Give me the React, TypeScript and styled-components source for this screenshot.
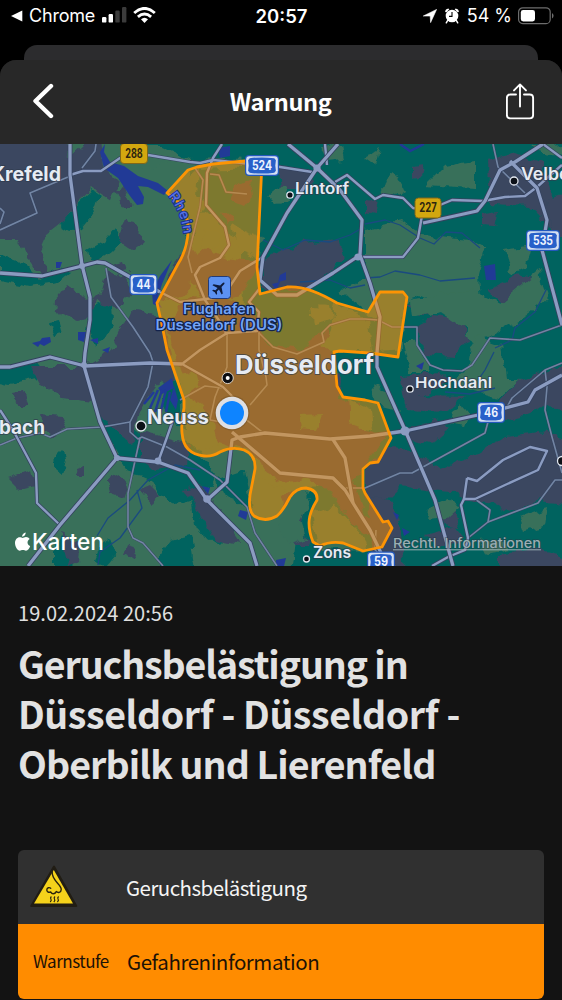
import React from "react";
import styled, { createGlobalStyle } from "styled-components";

const GlobalStyle = createGlobalStyle`
  * { box-sizing: border-box; }
  html, body { margin: 0; padding: 0; background: #000; }
  body { width: 562px; height: 1000px; overflow: hidden; }
`;

const sans = `"Noto Sans CJK SC", "Open Sans", sans-serif`;
const system = `Inter, "Liberation Sans", sans-serif`;

const Screen = styled.main`
  width: 562px;
  height: 1000px;
  overflow: hidden;
  display: flex;
  flex-direction: column;
  background: #000;
  font-family: ${sans};
`;

const StatusBar = styled.header`
  height: 45px;
  flex: none;
  padding: 0 8px 14px 11px;
  display: grid;
  grid-template-columns: 1fr auto 1fr;
  align-items: center;
  color: #fff;
  font-family: ${system};
  font-size: 18px;
`;

const StatusGroup = styled.div<{ $end?: boolean }>`
  display: flex;
  align-items: center;
  justify-content: ${(p) => (p.$end ? "flex-end" : "flex-start")};
  svg { display: block; flex: none; }
`;

const StatusText = styled.span<{ $l: number; $r: number; $track?: number }>`
  margin: 0 ${(p) => p.$r}px 0 ${(p) => p.$l}px;
  letter-spacing: ${(p) => p.$track ?? 0}px;
  white-space: nowrap;
`;

const Clock = styled.time`
  font-size: 18.5px;
  font-weight: 600;
  margin-right: 2px;
`;

const BackSheet = styled.div`
  flex: none;
  height: 15px;
  margin: 0 24px;
  border-radius: 13px 13px 0 0;
  background: #2c2c2e;
`;

const Sheet = styled.section`
  flex: 1;
  min-height: 0;
  display: flex;
  flex-direction: column;
  border-radius: 16px 16px 0 0;
  overflow: hidden;
  background: #131313;
`;

const NavBar = styled.nav`
  flex: none;
  height: 84px;
  padding: 0 26px 2px 32px;
  display: grid;
  grid-template-columns: 1fr auto 1fr;
  align-items: center;
  background: #282828;
`;

const NavTitle = styled.h1`
  margin: 0 7px 0 0;
  color: #fff;
  font-size: 23.5px;
  font-weight: 700;
  line-height: 32px;
  letter-spacing: -0.4px;
`;

const NavButton = styled.button<{ $end?: boolean }>`
  padding: 0;
  border: 0;
  background: none;
  color: #fff;
  justify-self: ${(p) => (p.$end ? "end" : "start")};
  svg { display: block; }
`;

const MapView = styled.svg`
  display: block;
  flex: none;
  width: 562px;
  height: 422px;
  font-family: ${system};
`;

const Article = styled.article`
  padding: 32px 18px 0;
  display: flex;
  flex-direction: column;
`;

const DateLine = styled.p`
  margin: 0;
  color: #e0e0e0;
  font-size: 20px;
  line-height: 30px;
  letter-spacing: 0.05px;
`;

const Headline = styled.h2`
  margin: 10px 0 0;
  color: #e2e2e2;
  font-size: 37.5px;
  font-weight: 700;
  line-height: 50px;
  white-space: nowrap;
`;

const HeadlineRow = styled.span<{ $track: number }>`
  display: block;
  letter-spacing: ${(p) => p.$track}px;
`;

const Card = styled.div`
  margin-top: 62px;
  border-radius: 6px;
  overflow: hidden;
`;

const CardRow = styled.div<{ $alert?: boolean }>`
  height: ${(p) => (p.$alert ? 75 : 74)}px;
  display: grid;
  grid-template-columns: ${(p) => (p.$alert ? "94px" : "96px")} 1fr;
  align-items: center;
  padding: 0 12px 1px ${(p) => (p.$alert ? 15 : 12)}px;
  background: ${(p) => (p.$alert ? "#ff8c00" : "#303030")};
  color: ${(p) => (p.$alert ? "#1c1206" : "#f5f5f5")};
`;

const CardValue = styled.span<{ $track: number }>`
  font-size: 20.5px;
  line-height: 30px;
  letter-spacing: ${(p) => p.$track}px;
`;

const CardLabel = styled.span`
  font-size: 17px;
  line-height: 26px;
  letter-spacing: -0.5px;
`;

const SLATE = "#3a4760";
const TEAL = "#04645f";
const GREEN = "#39705a";
const WATER = "#213a96";

const land: [string, string[]][] = [
  [TEAL, [
    "240,130 580,130 580,580 290,580 300,500 330,470 245,440",
    "0,255 20,262 38,280 62,268 72,270 58,282 30,286 0,280",
    "75,205 92,190 100,196 95,212 82,228 70,232 60,226",
    "88,250 105,240 115,228 122,240 112,252 98,262 90,260",
    "92,305 112,300 113,325 105,340 95,345 88,330",
    "48,322 60,320 64,334 54,336",
    "-10,368 40,362 36,378 10,384 -10,380",
    "90,392 102,388 112,405 132,425 150,440 160,455 150,480 128,470 110,440",
    "52,460 65,447 67,462 62,474 52,466",
    "130,458 190,440 215,475 205,498 180,505 160,495 150,478 132,475",
    "165,370 180,385 184,430 170,420 160,400",
    "160,555 172,540 190,535 196,580 160,580",
    "215,480 245,470 252,515 235,500 222,495",
    "190,500 220,510 235,530 220,545 195,530",
    "100,548 112,540 116,552 104,566 95,560",
    "60,535 75,550 74,580 55,580 55,545",
    "105,130 262,130 262,158 190,160 160,146 120,146",
    "196,170 262,168 262,240 236,240 214,214 196,215",
    "190,170 196,168 192,260 184,270",
  ]],
  [SLATE, [
    "-10,130 66,130 68,160 100,130 104,168 118,182 110,200 92,188 74,205 64,222 46,236 40,250 48,268 42,276 28,262 18,240 -10,240",
    "125,220 134,222 144,243 133,250 118,240",
    "56,300 68,284 80,292 90,302 102,290 108,270 124,278 132,292 118,308 96,300 90,318 76,320 55,312",
    "30,366 85,366 110,352 130,310 162,315 176,380 158,384 140,410 132,445 110,427 92,402 62,398 40,384",
    "13,392 24,390 28,402 20,408",
    "8,478 32,470 36,486 20,490",
    "107,478 118,473 128,487 124,498 110,493",
    "138,490 150,485 160,495 150,504",
    "75,468 84,465 84,474 76,474",
    "60,532 80,542 78,560 68,566",
    "128,545 138,548 134,560 124,556",
    "140,430 190,445 188,465 155,470 140,455",
    "185,490 200,484 212,500 230,520 240,545 215,540 200,515",
    "113,190 125,188 134,206 124,206",
    "113,262 124,260 128,272 120,274",
    "40,416 62,418 68,430 52,437 42,428",
    "166,325 190,296 225,298 252,310 268,345 300,350 326,330 342,380 340,400 360,404 366,430 386,436 368,462 354,480 362,510 376,530 372,540 350,520 330,490 305,478 282,482 262,470 250,452 214,440 205,405 188,395",
    "205,248 226,258 262,262 240,296 215,302 194,290 188,262",
    "176,262 190,240 200,255 190,290 170,300 160,298",
    "234,188 250,180 252,196 244,206 230,200",
    "222,214 230,212 234,220 226,224",
    "270,256 300,243 338,240 344,258 320,280 296,292 262,290 262,262",
    "278,165 300,170 317,170 304,190 280,190",
    "488,160 512,152 542,163 552,190 550,228 530,206 490,204",
    "416,330 430,315 455,318 470,338 455,356 425,354",
    "488,290 515,275 534,278 520,295 500,302",
    "406,303 430,303 436,312 420,317",
    "384,252 398,250 400,266 388,268",
    "365,470 390,448 412,450 440,470 475,455 505,436 540,432 580,440 580,505 540,500 505,512 492,505 470,500 455,492 425,490 400,486 380,506 365,495",
    "400,375 440,372 450,382 420,395 466,396 445,412 406,410",
    "408,428 436,420 450,428 430,445 410,440",
    "520,380 580,360 580,412 545,406 520,416 492,424 480,418 500,400",
    "425,535 455,528 464,540 440,548",
    "366,496 390,500 402,530 405,580 380,580",
    "440,510 455,505 460,530 446,528",
    "500,555 535,548 580,560 580,580 500,580",
    "480,215 498,212 495,225 480,224",
    "544,200 580,190 580,240 552,236",
    "282,500 294,490 305,500 300,530 310,545 290,545",
    "412,166 424,164 422,176 412,178",
    "366,200 380,202 376,214 366,212",
  ]],
  [GREEN, [
    "125,150 170,162 150,170 125,160",
    "425,185 445,165 475,160 475,188 440,186",
    "385,180 395,172 405,190 395,196 380,192",
    "320,148 340,140 344,160 328,162",
    "365,230 400,220 420,235 470,240 486,248 478,275 480,300 450,310 420,295 375,320 350,300 340,290 365,280",
    "410,300 470,290 500,303 540,270 546,300 520,320 480,342 474,352 466,330 440,312 412,318",
    "475,335 500,345 505,380 520,380 500,398 470,390 455,380 470,366",
    "404,340 416,340 430,372 410,372",
    "504,250 532,246 526,268 512,275",
    "268,196 284,184 290,202 276,204",
    "176,190 200,168 198,196 206,206 190,240 188,212",
    "206,228 222,236 215,250 200,248",
    "232,225 262,238 258,258 238,250",
    "310,305 330,306 332,318 312,325",
    "335,305 366,316 372,350 334,350 320,345 330,330",
    "190,410 200,404 212,420 220,445 195,450 186,440",
    "300,415 322,414 316,430 302,428",
    "348,400 370,410 372,430 350,424",
    "258,475 272,482 284,490 280,510 262,520 252,508",
    "178,375 196,372 200,386 186,392",
    "312,515 335,505 362,535 370,550 318,548",
    "300,520 310,500 300,490 288,500 278,525 290,545 305,540",
    "430,508 450,500 462,505 448,518 428,520",
    "520,518 548,508 545,525 525,532",
    "376,296 402,292 403,350 378,352 382,320",
    "372,385 385,390 400,412 375,405",
    "452,412 462,405 470,415 466,425 450,422",
    "480,540 500,538 510,550 488,555",
    "365,158 380,148 375,165",
    "530,146 562,144 562,156 545,154",
  ]],
];

const water = [
  "105,144 104,152 110,162 124,166 138,176 158,183 168,191 164,195 148,187 138,186 144,197 143,204 137,205 130,196 118,178 104,168 100,152",
  "172,260 162,284 157,300 162,308 153,304 152,292 160,276",
  "32,343 40,341 42,338 50,337 51,342 44,346 40,344 38,347",
  "56,262 62,262 60,268 56,268",
  "78,332 86,332 84,342 78,340",
  "90,340 98,338 98,344",
  "102,350 110,347 108,353",
  "158,388 172,378 174,388 162,394",
  "174,386 178,400 176,410 170,400",
  "484,266 495,264 496,280 486,280",
  "280,275 286,272 286,280 278,282",
  "272,284 280,282 276,290",
  "218,148 230,146 230,156 220,158",
  "240,510 248,512 246,520 238,516",
  "276,560 286,558 284,566 276,566",
  "393,512 399,515 397,520",
  "402,528 410,532 404,536",
  "416,366 424,362 422,370",
  "202,486 210,488 208,494",
];

const harbour = [
  "158,390 150,408",
  "162,390 155,412",
  "166,390 160,414",
  "170,392 166,412",
  "154,392 144,404",
  "400,144 410,151 424,144",
];

const streams = [
  "263,240 283,250 305,240 330,242 350,235 362,228",
  "365,224 385,220 400,225 420,238 434,244 446,232 462,233 480,248",
  "365,278 380,277 395,271 420,275 440,281 475,278",
  "546,290 535,312 515,328 512,340 495,348",
  "97,536 108,518 130,500 148,480 175,465 200,470",
  "137,490 142,508 120,538 100,552 98,565",
  "300,282 330,280 350,288 365,285",
  "494,352 485,370 478,380",
  "445,392 470,394 495,388",
];

const minorRoads = [
  "68,177 30,193 37,213 0,230",
  "0,208 4,212 0,224",
  "96,144 95,151 82,168",
  "106,268 111,297 133,327 150,353 153,362 148,387 130,422 130,432 138,439 142,437 167,447 190,460 220,480 247,507 255,533 277,566",
  "0,445 17,438 40,433 50,437 67,429 102,427 130,422",
  "140,438 128,493 128,527 133,538 143,543 163,566",
  "195,168 203,180 200,207 188,257 192,273",
  "210,174 219,175 226,192 247,194",
  "227,335 227,367 215,397 210,420 228,423",
  "250,405 267,385 266,377 259,350 259,332",
  "245,405 232,396 223,387",
  "257,331 273,347 297,354 324,342 322,333 330,325 350,319 365,319 378,320 392,327 417,327 417,345 430,365 443,370 462,371 472,365 490,338 520,340 562,325",
  "493,144 498,167 525,193",
  "562,363 545,370 512,398 507,407",
  "488,422 485,433 412,473 400,473 365,488 340,488",
  "545,370 547,387 545,410 552,437 562,473",
  "475,499 490,510 488,522 468,538",
  "488,522 538,503 555,480 562,480",
  "376,530 375,550 395,566",
  "180,400 205,386 222,388",
  "240,415 262,432 265,433",
];

const midRoads = [
  "70,175 83,171 101,171 120,158 148,155 190,162 200,163 213,160 280,167 312,172",
  "222,144 213,158 207,173 206,205 225,227 229,245 220,258 200,267 195,275 205,300 220,322 227,335",
  "263,257 240,271 223,297 180,302 160,292",
  "335,182 347,175 375,199 383,195 403,198 413,208 428,210 452,200 483,201 505,197 525,196 537,187 562,165",
  "182,364 200,350 227,333 257,331 259,312 249,302 260,288",
  "182,364 223,387 232,396",
  "467,478 477,481 503,460 530,447 547,451 538,470 505,485 475,499 464,499 467,478",
  "464,499 461,505 468,538 465,550 448,557 432,566",
  "325,144 327,165",
  "543,144 562,158",
  "173,420 166,440 158,462",
  "0,410 13,430 36,473 37,503 60,525",
  "423,210 418,238 403,257 360,257",
];

const majorRoads = [
  "70,144 70,175 82,265 90,297 90,320 85,353 84,366 100,422 117,458 60,525 28,566",
  "0,273 42,276 82,266 97,262 105,263 130,277 160,292",
  "0,367 10,367 50,357 85,366 150,363 182,364",
  "117,458 158,462 188,473 207,500 250,543 257,566",
  "207,500 227,482 232,440 240,437 265,433 330,439 370,436 405,431 478,415 528,402 535,390 562,375",
  "232,432 280,473 333,478 345,490 353,503 370,530 382,555",
  "332,438 345,458 353,503",
  "288,144 317,168 340,190 362,220 360,255 370,283 380,317 377,353 377,367 405,430 435,500 453,566",
  "338,144 317,168 287,213 263,257 260,280 277,295 297,295 333,273 357,257",
  "423,223 477,211 485,201 500,170 515,162 543,144",
  "510,161 537,188 547,220 542,250 562,325",
];

const area =
  "M262 163L245 161L213 164L197 167L188 170L167 193L177 201Q189 214 188 232Q187 250 178 264L157 303L163 330L167 350L184 400L184 408Q181 423 182 433Q183 444 188 449Q194 455 204 456Q212 457 220 452Q232 446 244 450Q256 455 255 469L250 495Q248 511 254 516Q265 523 277 516Q283 511 290 497Q296 488 306 488Q318 490 317 500Q309 513 309 523Q309 532 313 542L320 546Q330 541 343 543L363 551L382 547L392 528L388 521L383 522L365 493L363 488V469L370 463L378 462L391 438L378 403L365 400L343 397L337 386L334 352L340 351L370 353L398 357L407 297L403 292H380L368 312L337 303Q307 285 287 287L260 294L257 267Z";

interface Town {
  t: string;
  x: number;
  y: number;
  w?: number;
  s: number;
  bold?: number;
}

const towns: Town[] = [
  { t: "Krefeld", x: -9, y: 181, w: 70, s: 19.5, bold: 700 },
  { t: "Lintorf", x: 295, y: 194, w: 54, s: 15.5, bold: 600 },
  { t: "Velbert", x: 521, y: 180, w: 62, s: 17, bold: 600 },
  { t: "Düsseldorf", x: 235, y: 374, w: 139, s: 26, bold: 700 },
  { t: "Neuss", x: 147, y: 424, w: 62, s: 20, bold: 700 },
  { t: "Hochdahl", x: 415, y: 388, w: 77, s: 15, bold: 600 },
  { t: "bach", x: -1, y: 434, w: 46, s: 19, bold: 700 },
  { t: "Zons", x: 313, y: 558, w: 38, s: 15.5, bold: 600 },
];

const dots = [
  [290, 195, 3.2],
  [514, 181, 4],
  [141, 426, 5],
  [410, 389, 3.2],
  [306.5, 559, 3],
  [562, 461, 4.5],
];

const Shield = ({ x, y, t, yellow, w = 26 }: { x: number; y: number; t: string; yellow?: boolean; w?: number }) => (
  <g transform={`translate(${x} ${y})`}>
    {yellow ? (
      <rect x={-w / 2} y="-10" width={w} height="20" rx="3.5" fill="#d3a70f" stroke="#80671a" strokeWidth="1" />
    ) : (
      <>
        <rect x={-w / 2 - 0.5} y="-10.5" width={w + 1} height="21" rx="4" fill="#2358bd" />
        <rect x={-w / 2 + 0.7} y="-9.3" width={w - 1.4} height="18.6" rx="3" fill="#d5e0f2" />
        <path
          d={`M${-w / 2 + 4.2} -7.2Q0 -9 ${w / 2 - 4.2} -7.2L${w / 2 - 2.6} -5.2L${w / 2 - 3.2} 0L${w / 2 - 2.6} 5.2L${w / 2 - 4.2} 7.2Q0 9 ${-w / 2 + 4.2} 7.2L${-w / 2 + 2.6} 5.2L${-w / 2 + 3.2} 0L${-w / 2 + 2.6} -5.2Z`}
          fill="#2860c9"
        />
      </>
    )}
    <text
      y="4.4"
      textAnchor="middle"
      fontSize="12.5"
      fontWeight="700"
      textLength={t.length === 3 ? (yellow ? 17.5 : 20) : 14}
      lengthAdjust="spacingAndGlyphs"
      fill={yellow ? "#2d260f" : "#edf3ff"}
    >
      {t}
    </text>
  </g>
);

const Lines = ({ items, w, casing }: { items: string[]; w: number; casing: number }) => (
  <g fill="none" strokeLinejoin="round">
    {items.map((p) => (
      <polyline key={"c" + p} points={p} stroke="#34425f" strokeWidth={casing} />
    ))}
    {items.map((p) => (
      <polyline key={p} points={p} stroke={w < 2 ? "#7285a3" : "#8b9cc1"} strokeWidth={w} />
    ))}
  </g>
);

const WarningMap = () => (
  <MapView viewBox="0 144 562 422" role="img">
    <defs>
      <filter id="coast" x="-5%" y="-5%" width="110%" height="110%">
        <feTurbulence type="fractalNoise" baseFrequency="0.09" numOctaves="2" seed="4" />
        <feDisplacementMap in="SourceGraphic" scale="11" xChannelSelector="R" yChannelSelector="G" />
      </filter>
      <path id="river" d="M168 196Q182 212 184 238" />
    </defs>
    <rect y="144" width="562" height="422" fill={GREEN} />
    <g filter="url(#coast)">
      {land.map(([fill, shapes]) =>
        shapes.map((p) => <polygon key={fill + p} points={p} fill={fill} />)
      )}
    </g>
    {water.map((p) => (
      <polygon key={p} points={p} fill={WATER} />
    ))}
    <g fill="none" stroke={WATER} strokeWidth="2.4">
      {harbour.map((p) => (
        <polyline key={p} points={p} />
      ))}
    </g>
    <g fill="none" stroke="#1a4a80" strokeWidth="1.3" strokeLinejoin="round">
      {streams.map((p) => (
        <polyline key={p} points={p} />
      ))}
    </g>
    <Lines items={minorRoads} w={1.6} casing={2.4} />
    <Lines items={midRoads} w={2.4} casing={3.8} />
    <Lines items={majorRoads} w={3.3} casing={4.9} />
    <g fill="#8b9cc1">
      <circle cx="405" cy="431" r="4.6" />
      <circle cx="207" cy="499" r="3.8" />
      <circle cx="117" cy="458" r="3" />
      <circle cx="158" cy="461" r="3.4" />
      <circle cx="84" cy="365" r="3" />
      <circle cx="82" cy="266" r="3" />
      <circle cx="358" cy="257" r="3.6" />
      <circle cx="317" cy="168" r="3.6" />
    </g>
    <path d={area} fill="#fa9000" fillOpacity="0.5" stroke="#fd9404" strokeWidth="2.8" strokeLinejoin="round" />

    <text fontSize="14" fontWeight="500" fill="#5470e6" stroke="#1c3184" strokeWidth="2" paintOrder="stroke">
      <textPath href="#river" textLength="42">Rhein</textPath>
    </text>

    <Shield x={134} y={153.5} t="288" yellow w={27} />
    <Shield x={262} y={165.5} t="524" w={33} />
    <Shield x={428} y={208} t="227" yellow />
    <Shield x={543} y={240.5} t="535" w={33} />
    <Shield x={143.5} y={284.5} t="44" w={27} />
    <Shield x={491} y={412.5} t="46" w={27} />
    <Shield x={381} y={562} t="59" w={27} />

    <rect x="208.5" y="276.5" width="22" height="22" rx="3" fill="#5c92f2" stroke="#223b78" />
    <path
      transform="translate(219.5 287.5) rotate(45) scale(.62)"
      d="M0-11C1-11 1.6-9.5 1.6-7.8V-3L10.5 3V5.6L1.6 2.8V7.6L4.6 10V12L0 10.7L-4.6 12V10L-1.6 7.6V2.8L-10.5 5.6V3L-1.6-3V-7.8C-1.6-9.5-1-11 0-11Z"
      fill="#101d3c"
    />
    <g fontSize="14.5" fontWeight="600" textAnchor="middle" fill="#73a4f8" stroke="#12234d" strokeWidth="2.4" strokeLinejoin="round" paintOrder="stroke">
      <text x="219" y="314.3" textLength="72" lengthAdjust="spacingAndGlyphs">Flughafen</text>
      <text x="219" y="329.8" textLength="127" lengthAdjust="spacingAndGlyphs">Düsseldorf (DUS)</text>
    </g>

    {dots.map(([x, y, r]) => (
      <circle key={x} cx={x} cy={y} r={r} fill="#0d1118" stroke="#e3e8f0" strokeWidth="1.3" />
    ))}
    <circle cx="227.7" cy="378" r="5.6" fill="#0b0d12" stroke="#e9e2d8" strokeWidth="0.9" />
    <circle cx="227.7" cy="378" r="2" fill="#fff" />

    {towns.map((c) => (
      <text
        key={c.t}
        x={c.x}
        y={c.y}
        fontSize={c.s}
        fontWeight={c.bold}
        textLength={c.w}
        lengthAdjust="spacingAndGlyphs"
        fill="#e6ebf3"
        stroke="#2f3b4d"
        strokeOpacity="0.7"
        strokeWidth="1.8"
        strokeLinejoin="round"
        paintOrder="stroke"
      >
        {c.t}
      </text>
    ))}

    <circle cx="232" cy="413" r="17.5" fill="#000" opacity="0.12" />
    <circle cx="232" cy="413" r="16.3" fill="#dedfe3" />
    <circle cx="232" cy="413" r="12" fill="#0e84ff" />

    <path
      transform="translate(15 532.5)"
      fill="#fff"
      d="M10.7 0C10.9 2.2 9.1 4.2 7.1 4.2C6.9 2.1 8.7.2 10.7 0ZM7.6 5.4C8.5 5.4 9.4 4.5 11 4.5C12.6 4.5 13.9 5.3 14.7 6.4C11.5 8.2 12 12.3 15.2 13.5C14.5 15.6 12.8 18.3 11 18.3C9.9 18.3 9.3 17.6 7.9 17.6C6.5 17.6 5.8 18.3 4.8 18.3C2.5 18.3 0 14 0 10.6C0 6.9 2.3 4.7 4.6 4.7C6 4.7 7 5.4 7.6 5.4Z"
    />
    <text x="32" y="550" fontSize="23" fontWeight="500" textLength="72" lengthAdjust="spacingAndGlyphs" fill="#fff">
      Karten
    </text>
    <g stroke="#283b48" strokeOpacity="0.6" strokeWidth="1.4" paintOrder="stroke" fill="#9aaeb3">
      <text x="393" y="548" fontSize="13.5" fontWeight="500" textLength="148" lengthAdjust="spacingAndGlyphs">
        Rechtl. Informationen
      </text>
    </g>
    <rect x="393" y="549.3" width="148" height="1" fill="#9aaeb3" />
  </MapView>
);

const SignalIcon = () => (
  <svg width="25" height="17" viewBox="0 0 25 17">
    <rect x="0" y="10" width="4.4" height="5.6" rx="1.2" fill="#fff" />
    <rect x="6.6" y="7" width="4.4" height="8.6" rx="1.2" fill="#fff" />
    <rect x="13.3" y="3.5" width="4.4" height="12.1" rx="1.2" fill="#3b3b3b" />
    <rect x="20" y="0" width="4.4" height="15.6" rx="1.2" fill="#3b3b3b" />
  </svg>
);

const WifiIcon = () => (
  <svg width="23" height="17" viewBox="0 0 23 17" fill="none" stroke="#fff" strokeWidth="2.9">
    <path d="M1.2 6Q11.5 -3.2 21.8 6" />
    <path d="M4.9 9.8Q11.5 4.2 18.1 9.8" />
    <path d="M8 12.2Q11.5 9.2 15 12.2L11.5 16Z" fill="#fff" stroke="none" />
  </svg>
);

const AlarmIcon = () => (
  <svg width="14" height="16" viewBox="0 0 14 16">
    <path d="M0 3.4Q.4 1 3.2.4L4.3 1.2L1.2 4.6ZM14 3.4Q13.6 1 10.8.4L9.7 1.2L12.8 4.6Z" fill="#fff" />
    <circle cx="7" cy="8" r="6.3" fill="#fff" />
    <path d="M2.6 12.5L1.3 14.8M11.4 12.5L12.7 14.8" stroke="#fff" strokeWidth="1.5" strokeLinecap="round" />
    <path d="M7 4V8.4H4" fill="none" stroke="#000" strokeWidth="1.1" />
  </svg>
);

const BatteryIcon = () => (
  <svg width="36" height="18" viewBox="0 0 36 18">
    <rect x=".6" y=".8" width="31.6" height="15.8" rx="4.2" fill="none" stroke="#6d6d6d" strokeWidth="1.2" />
    <rect x="2.8" y="3" width="14.2" height="11.4" rx="2.4" fill="#fff" />
    <path d="M34 6Q35.6 7 35.6 8.7T34 11.4Z" fill="#6d6d6d" />
  </svg>
);

const OdourSign = () => (
  <svg width="48" height="43" viewBox="0 0 48 43">
    <path d="M24 1.5L46.3 41H1.2Z" fill="#211d14" stroke="#211d14" strokeWidth="2" strokeLinejoin="round" />
    <path d="M23.8 5L43 38.6H4Z" fill="#f5d21b" />
    <path
      d="M22.2 6.5C21.2 15.5 31.8 19.6 31.2 24.6C31 27.6 28 28.3 26.3 26.6C24.6 29.6 21.8 29.3 20.8 27C18.6 27.9 16.3 26.6 16.9 24.3C17.3 22.7 19.4 22.2 20.7 23.2"
      fill="none"
      stroke="#2a240e"
      strokeWidth="1.4"
      strokeLinecap="round"
      strokeLinejoin="round"
    />
    <path d="M21.4 31.5Q19.9 33 20.9 34.2T20.2 37M25 31.5Q23.5 33 24.5 34.2T23.8 37M28.6 31.5Q27.1 33 28.1 34.2T27.4 37" fill="none" stroke="#2a240e" strokeWidth="1.2" />
  </svg>
);

export default function App() {
  return (
    <Screen>
      <GlobalStyle />
      <StatusBar>
        <StatusGroup>
          <svg width="12" height="12" viewBox="0 0 12 12">
            <path d="M0 6L11.3 .4V11.6Z" fill="#fff" />
          </svg>
          <StatusText $l={6} $r={7} $track={-0.2}>Chrome</StatusText>
          <SignalIcon />
          <StatusText $l={3} $r={3} />
          <WifiIcon />
        </StatusGroup>
        <Clock>20:57</Clock>
        <StatusGroup $end>
          <svg width="14" height="14" viewBox="0 0 14 14">
            <path d="M13.6.4L7.6 13.6L7.2 7H.3Z" fill="#fff" stroke="#fff" strokeWidth=".6" strokeLinejoin="round" />
          </svg>
          <StatusText $l={4} $r={4} />
          <AlarmIcon />
          <StatusText $l={8} $r={6}>54 %</StatusText>
          <BatteryIcon />
        </StatusGroup>
      </StatusBar>
      <BackSheet />
      <Sheet>
        <NavBar>
          <NavButton aria-label="Zurück">
            <svg width="22" height="36" viewBox="0 0 22 36">
              <path d="M19 3L3.5 18L19 33" fill="none" stroke="#fff" strokeWidth="4.4" strokeLinecap="round" strokeLinejoin="round" />
            </svg>
          </NavButton>
          <NavTitle>Warnung</NavTitle>
          <NavButton $end aria-label="Teilen">
            <svg width="30" height="38" viewBox="0 0 30 38" fill="none" stroke="#fff" strokeWidth="1.9" strokeLinecap="round" strokeLinejoin="round">
              <path d="M10 12.5H4.4Q.9 12.5 .9 15.9V33Q.9 36.4 4.4 36.4H23.6Q27.1 36.4 27.1 33V15.9Q27.1 12.5 23.6 12.5H18" />
              <path d="M14 24.5V2.4M8 8.4L14 2.4L20 8.4" />
            </svg>
          </NavButton>
        </NavBar>
        <WarningMap />
        <Article>
          <DateLine>19.02.2024 20:56</DateLine>
          <Headline>
            <HeadlineRow $track={-1.1}>Geruchsbelästigung in</HeadlineRow>
            <HeadlineRow $track={-0.4}>Düsseldorf - Düsseldorf -</HeadlineRow>
            <HeadlineRow $track={-0.9}>Oberbilk und Lierenfeld</HeadlineRow>
          </Headline>
          <Card>
            <CardRow>
              <OdourSign />
              <CardValue $track={-0.55}>Geruchsbelästigung</CardValue>
            </CardRow>
            <CardRow $alert>
              <CardLabel>Warnstufe</CardLabel>
              <CardValue $track={-0.45}>Gefahreninformation</CardValue>
            </CardRow>
          </Card>
        </Article>
      </Sheet>
    </Screen>
  );
}
